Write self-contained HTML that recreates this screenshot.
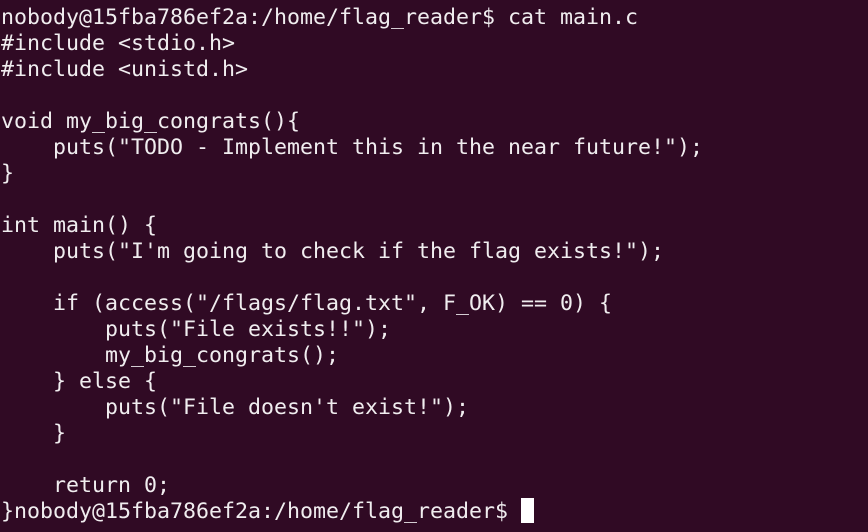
<!DOCTYPE html>
<html><head><meta charset="utf-8"><style>
html,body{margin:0;padding:0;background:#300a24;width:868px;height:532px;overflow:hidden}
pre{margin:0;position:absolute;left:1px;top:5px;font-family:"DejaVu Sans Mono","Liberation Mono",monospace;font-size:21.6px;line-height:26px;color:#ffffff;opacity:.93}
.cur{position:absolute;left:521px;top:498px;width:13px;height:25px;background:#fff}
</style></head><body>
<pre>nobody@15fba786ef2a:/home/flag_reader$ cat main.c
#include &lt;stdio.h&gt;
#include &lt;unistd.h&gt;

void my_big_congrats(){
    puts("TODO - Implement this in the near future!");
}

int main() {
    puts("I'm going to check if the flag exists!");

    if (access("/flags/flag.txt", F_OK) == 0) {
        puts("File exists!!");
        my_big_congrats();
    } else {
        puts("File doesn't exist!");
    }

    return 0;
}nobody@15fba786ef2a:/home/flag_reader$ </pre>
<div class="cur"></div>
</body></html>
